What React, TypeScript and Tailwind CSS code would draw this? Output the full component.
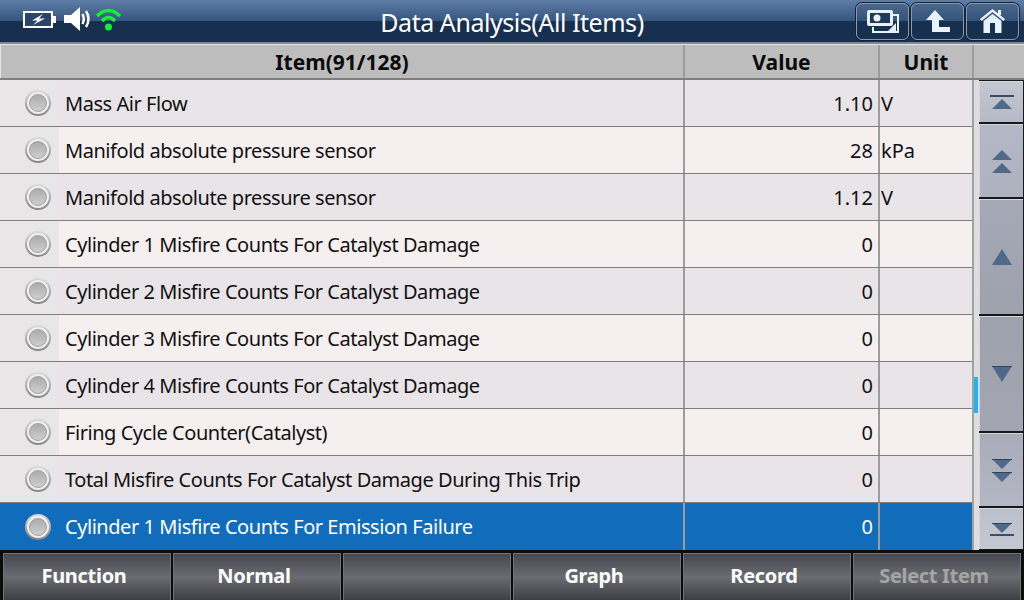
import React from "react";

const rows = [
  { name: "Mass Air Flow", value: "1.10", unit: "V" },
  { name: "Manifold absolute pressure sensor", value: "28", unit: "kPa" },
  { name: "Manifold absolute pressure sensor", value: "1.12", unit: "V" },
  { name: "Cylinder 1 Misfire Counts For Catalyst Damage", value: "0", unit: "" },
  { name: "Cylinder 2 Misfire Counts For Catalyst Damage", value: "0", unit: "" },
  { name: "Cylinder 3 Misfire Counts For Catalyst Damage", value: "0", unit: "" },
  { name: "Cylinder 4 Misfire Counts For Catalyst Damage", value: "0", unit: "" },
  { name: "Firing Cycle Counter(Catalyst)", value: "0", unit: "" },
  { name: "Total Misfire Counts For Catalyst Damage During This Trip", value: "0", unit: "" },
  { name: "Cylinder 1 Misfire Counts For Emission Failure", value: "0", unit: "" },
];

const footerButtons = ["Function", "Normal", "", "Graph", "Record", "Select Item"];

function Radio() {
  return (
    <div className="w-[26px] h-[26px] rounded-full bg-gradient-to-b from-[#dcdcdc] to-[#858585] flex items-center justify-center">
      <div className="w-[22px] h-[22px] rounded-full bg-[#f0f0f0] flex items-center justify-center">
        <div className="w-[18px] h-[18px] rounded-full bg-gradient-to-b from-[#ababab] to-[#cfcfcf] border border-[#a0a0a0]" />
      </div>
    </div>
  );
}

function Row({ name, value, unit, index }: { name: string; value: string; unit: string; index: number }) {
  const selected = index === 9;
  const stripe = index % 2 === 0 ? "bg-[#e8e4e7]" : "bg-[#f6eff0]";
  return (
    <div
      className={`h-[47px] flex text-[20px] ${
        selected ? "bg-[#116dbb] text-white" : `${stripe} text-[#111] border-b border-[#7f7f7f]`
      }`}
    >
      <div className="w-[683px] flex items-stretch">
        <div className={`w-[59px] pl-[25px] shrink-0 flex items-center ${selected ? "" : "bg-[#e9e6e8]"}`}>
          <Radio />
        </div>
        <span className="pl-[6px] pt-[1px] self-center tracking-[-0.45px] whitespace-nowrap">{name}</span>
      </div>
      <div className="w-[195px] border-l-2 border-[#9c9c9c] flex items-center justify-end pt-[1px] pr-[5px]">{value}</div>
      <div className="w-[94px] border-l-2 border-[#9c9c9c] flex items-center pt-[1px] pl-[1px]">{unit}</div>
    </div>
  );
}

function Up({ h }: { h: number }) {
  return (
    <svg width="20" height={h} viewBox={`0 0 20 ${h}`}>
      <polygon points={`10,0 20,${h} 0,${h}`} fill="#50698a" />
    </svg>
  );
}

function Down({ h }: { h: number }) {
  return (
    <svg width="20" height={h} viewBox={`0 0 20 ${h}`}>
      <polygon points={`0,0 20,0 10,${h}`} fill="#50698a" />
      <rect x="0" y="0" width="20" height="1" fill="#2f4359" />
    </svg>
  );
}

function ScrollButton({ height, tone, children }: { height: string; tone: string; children: React.ReactNode }) {
  return (
    <div className={`${height} ${tone} border-t border-l border-[#d4d6dc] flex flex-col gap-[3px] items-center justify-center shrink-0`}>
      {children}
    </div>
  );
}

function ScrollColumn() {
  return (
    <div className="w-[52px] h-[470px] flex bg-[#dedee0] border-l-2 border-[#a2a2a2]">
      <div className="w-[5px] shrink-0 pt-[297px]">
        <div className="w-[4px] h-[36px] bg-[#1cb4f5]" />
      </div>
      <div className="w-[45px] flex flex-col bg-[#181818] gap-[2px] pt-[1px] pr-[1px]">
        <ScrollButton height="h-[41px]" tone="bg-gradient-to-b from-[#c2c7d2] to-[#b6bac6]">
          <div className="w-[24px] h-[2px] bg-[#3c4f62] -mb-[1px]" />
          <Up h={10} />
        </ScrollButton>
        <ScrollButton height="h-[73px]" tone="bg-gradient-to-b from-[#b4b8c6] to-[#aeb2bf]">
          <Up h={10} />
          <Up h={10} />
        </ScrollButton>
        <ScrollButton height="h-[115px]" tone="bg-gradient-to-b from-[#a5a8b6] to-[#9ea2ad]">
          <Up h={16} />
        </ScrollButton>
        <ScrollButton height="h-[115px]" tone="bg-gradient-to-b from-[#9ea2ad] to-[#a3a6b2]">
          <Down h={16} />
        </ScrollButton>
        <ScrollButton height="h-[73px]" tone="bg-gradient-to-b from-[#a9acb8] to-[#b3b7c3]">
          <Down h={10} />
          <Down h={10} />
        </ScrollButton>
        <ScrollButton height="h-[41px]" tone="bg-gradient-to-b from-[#bcc0ca] to-[#c4c8d2]">
          <Down h={10} />
          <div className="w-[24px] h-[2px] bg-[#3c4f62] -mt-[2px]" />
        </ScrollButton>
      </div>
    </div>
  );
}

function HeaderButton({ children }: { children: React.ReactNode }) {
  return (
    <div className="w-[53px] h-[37px] rounded-[6px] border border-[#8c99a8] bg-gradient-to-b from-[#4a678c] from-0% via-[#33527a] via-50% to-[#18304f] to-50% shadow-[0_0_0_1px_#12233b] flex items-center justify-center">
      {children}
    </div>
  );
}

export default function App() {
  return (
    <div
      className="w-[1024px] h-[600px] overflow-hidden flex flex-col bg-[#e0e0e2]"
      style={{ fontFamily: '"Noto Sans", sans-serif' }}
    >
      {/* Title bar */}
      <div className="h-[44px] shrink-0 bg-gradient-to-b from-[#5f7ea6] from-0% via-[#35557f] via-50% to-[#18304f] to-50% border-b-2 border-[#7d8894] flex items-center">
        <div className="w-[171px] shrink-0 flex items-center pl-[23px] pb-[4px]">
          <svg width="33" height="17" viewBox="0 0 33 17">
            <rect x="1" y="1" width="28" height="15" fill="#2a4568" stroke="#fff" strokeWidth="2" />
            <rect x="29" y="5" width="4" height="7" fill="#fff" />
            <path d="M20 3 L9 9.5 L14.5 9.5 L10 14 L22 7.5 L16 7.5 Z" fill="#fff" />
          </svg>
          <svg width="27" height="24" viewBox="0 0 27 24" className="ml-[8px]">
            <path d="M0 8 H7 L16 0 V24 L7 16 H0 Z" fill="#fff" />
            <path d="M18.5 7 Q21 12 18.5 17 M22 4 Q27 12 22 20" stroke="#fff" strokeWidth="2.5" fill="none" />
          </svg>
          <svg width="27" height="24" viewBox="0 0 27 24" className="ml-[4px]">
            <path d="M2 9 Q13.5 -2 25 9" stroke="#12f03a" strokeWidth="3.5" fill="none" />
            <path d="M7 14 Q13.5 7 20 14" stroke="#12f03a" strokeWidth="3.5" fill="none" />
            <circle cx="13.5" cy="20" r="3.5" fill="#12f03a" />
          </svg>
        </div>
        <div className="flex-1 text-center text-white text-[25px] pt-[3px] tracking-[-0.45px] whitespace-nowrap">
          Data Analysis(All Items)
        </div>
        <div className="w-[171px] shrink-0 flex justify-end gap-[2px] pr-[5px]">
          <HeaderButton>
            <svg width="32" height="23" viewBox="0 0 32 23">
              <path d="M26 5 H31 V22 H6 V17" fill="none" stroke="#e8f0f8" strokeWidth="2" />
              <rect x="0" y="0" width="26" height="16" rx="2" fill="#e8f0f8" />
              <rect x="3" y="3" width="20" height="10" fill="#1d3a5c" />
              <circle cx="10" cy="8" r="3.5" fill="#e8f0f8" />
              <path d="M20 22 L29 13 V22 Z" fill="#e8f0f8" />
            </svg>
          </HeaderButton>
          <HeaderButton>
            <svg width="26" height="24" viewBox="0 0 26 24">
              <path d="M10 1 L19 11 H14 V18 H25 V23 H7 V11 H1 Z" fill="#e8f2fa" />
            </svg>
          </HeaderButton>
          <HeaderButton>
            <svg width="25" height="24" viewBox="0 0 25 24">
              <path d="M12.5 0 L25 10 L23.5 12 L12.5 3 L1.5 12 L0 10 Z" fill="#e8f2fa" />
              <rect x="18" y="1" width="3" height="5" fill="#e8f2fa" />
              <path d="M3.5 12 L12.5 5 L21.5 12 V24 H15 V14 H10 V24 H3.5 Z" fill="#e8f2fa" />
            </svg>
          </HeaderButton>
        </div>
      </div>

      {/* Table header */}
      <div className="h-[36px] shrink-0 flex bg-[#bdbdbd] border-t border-[#e6e6e6] border-b-2 border-b-[#7f7f7f] text-[21px] font-bold text-[#0a0a0a]">
        <div className="w-[683px] flex items-center justify-center pt-[2px] border-l border-[#e6e6e6]">
          <span>Item(91/128)</span>
        </div>
        <div className="w-[195px] flex items-center justify-center pt-[2px] border-l-2 border-[#9c9c9c]">Value</div>
        <div className="w-[94px] flex items-center justify-center pt-[2px] border-l-2 border-[#9c9c9c]">Unit</div>
        <div className="flex-1 border-l-2 border-[#9c9c9c]" />
      </div>

      {/* Table body */}
      <div className="flex h-[470px] shrink-0">
        <div className="w-[972px] shrink-0">
          {rows.map((row, i) => (
            <Row key={i} index={i} name={row.name} value={row.value} unit={row.unit} />
          ))}
        </div>
        <ScrollColumn />
      </div>

      {/* Bottom buttons */}
      <div className="flex-1 bg-[#0c0c0c] flex gap-[2px] pt-[3px] pl-[3px] pr-[3px]">
        {footerButtons.map((label, i) => (
          <div
            key={i}
            className={`w-[168px] flex-1 border-t border-x border-[#6f7278] bg-gradient-to-b from-[#45484e] via-[#6a6c72] to-[#3d3f44] flex items-center justify-center pr-[6px] pb-[2px] text-[20px] font-bold tracking-[-0.3px] ${
              label === "Select Item" ? "text-[#a5a5a5]" : "text-white"
            }`}
          >
            {label}
          </div>
        ))}
      </div>
    </div>
  );
}
